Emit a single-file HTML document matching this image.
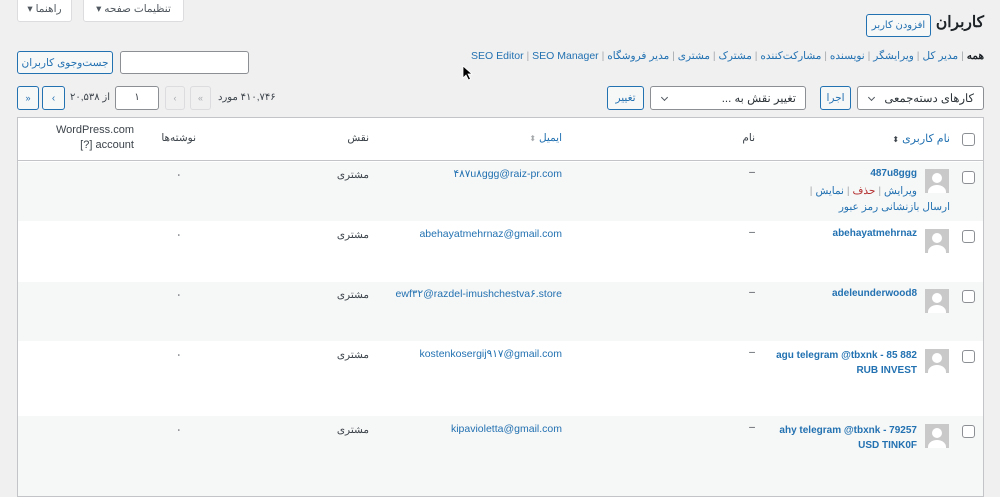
<!DOCTYPE html>
<html><head><meta charset="utf-8"><style>
*{box-sizing:border-box;margin:0;padding:0}
body{width:1000px;height:491px;overflow:hidden;background:#f0f0f1;font-family:"Liberation Sans","Noto Sans CJK SC",sans-serif;font-size:10.5px;color:#3c434a;position:relative}
.a{position:absolute;white-space:nowrap}
.rtl{direction:rtl}
.btn{position:absolute;border:1px solid #2271b1;color:#2271b1;background:#f6f7f7;border-radius:3px;font-size:10.5px;display:flex;align-items:center;justify-content:center;direction:rtl}
.sel{position:absolute;border:1px solid #8c8f94;background:#fff;border-radius:3px;font-size:11.5px;color:#2c3338;direction:rtl;padding-right:9px;display:flex;align-items:center}
.sel:after{content:"";position:absolute;left:11px;top:8px;width:4px;height:4px;border-right:1.3px solid #50575e;border-bottom:1.3px solid #50575e;transform:rotate(45deg)}
.lnk{color:#2271b1}
.iso{unicode-bidi:isolate}
.cb{position:absolute;width:13px;height:13px;border:1px solid #8c8f94;border-radius:3px;background:#fff}
.av{position:absolute;width:24px;height:24px;background:#c9c9c9;overflow:hidden}
.av:before{content:"";position:absolute;left:7px;top:4px;width:10px;height:10px;border-radius:50%;background:#fff}
.av:after{content:"";position:absolute;left:3px;top:16px;width:18px;height:14px;border-radius:50% 50% 0 0;background:#fff}
.row{position:absolute;left:18px;width:965px}
.r{position:absolute;direction:rtl;white-space:nowrap}
.un{font-size:10px;font-weight:bold}
</style></head><body>
<div class="a rtl" style="left:17px;top:-4px;width:55px;height:26px;background:#fff;border:1px solid #dcdcde;border-radius:3px;font-size:10.5px;display:flex;align-items:center;justify-content:center;color:#50575e">راهنما ▾</div>
<div class="a rtl" style="left:83px;top:-4px;width:101px;height:26px;background:#fff;border:1px solid #dcdcde;border-radius:3px;font-size:10.5px;display:flex;align-items:center;justify-content:center;color:#50575e">تنظیمات صفحه ▾</div>

<div class="r" style="right:16px;top:13px;font-size:15.5px;font-weight:bold;color:#1d2327">کاربران</div>
<div class="btn" style="left:866px;top:14px;width:65px;height:23px;font-size:10px">افزودن کاربر</div>

<div class="r" style="right:16px;top:50px;font-size:10.5px;color:#a7aaad"><b style="color:#1d2327">همه</b> | <span class="lnk">مدیر کل</span> | <span class="lnk">ویرایشگر</span> | <span class="lnk">نویسنده</span> | <span class="lnk">مشارکت‌کننده</span> | <span class="lnk">مشترک</span> | <span class="lnk">مشتری</span> | <span class="lnk">مدیر فروشگاه</span> | <span class="lnk iso">SEO Manager</span> | <span class="lnk iso">SEO Editor</span></div>

<div class="btn" style="left:17px;top:51px;width:96px;height:23px">جست‌وجوی کاربران</div>
<div class="a" style="left:120px;top:51px;width:129px;height:23px;background:#fff;border:1px solid #8c8f94;border-radius:3px"></div>
<svg class="a" style="left:462px;top:65px" width="12" height="16" viewBox="0 0 12 16"><path d="M1 1 L1 13 L4 10 L6.5 15 L8.5 14 L6 9 L10 9 Z" fill="#000" stroke="#fff" stroke-width="0.8"/></svg>

<div class="sel" style="left:857px;top:86px;width:127px;height:24px">کارهای دسته‌جمعی</div>
<div class="btn" style="left:820px;top:86px;width:31px;height:24px">اجرا</div>
<div class="sel" style="left:650px;top:86px;width:156px;height:24px">تغییر نقش به ...</div>
<div class="btn" style="left:607px;top:86px;width:37px;height:24px">تغییر</div>

<div class="btn" style="left:17px;top:86px;width:22px;height:24px;font-size:9px">«</div>
<div class="btn" style="left:42px;top:86px;width:23px;height:24px;font-size:10px">›</div>
<div class="r" style="left:70px;top:92px;font-size:10px">از ۲۰,۵۳۸</div>
<div class="a" style="left:115px;top:86px;width:44px;height:24px;background:#fff;border:1px solid #8c8f94;border-radius:3px;font-size:10px;text-align:center;line-height:22px">۱</div>
<div class="a" style="left:165px;top:86px;width:20px;height:24px;border:1px solid #dcdcde;border-radius:3px;color:#a7aaad;font-size:9px;text-align:center;line-height:22px">‹</div>
<div class="a" style="left:190px;top:86px;width:21px;height:24px;border:1px solid #dcdcde;border-radius:3px;color:#a7aaad;font-size:9px;text-align:center;line-height:22px">«</div>
<div class="r" style="left:218px;top:92px;font-size:10px">۴۱۰,۷۴۶ مورد</div>

<div class="a" style="left:17px;top:117px;width:967px;height:380px;border:1px solid #c3c4c7;background:#fff"></div>
<div class="row" style="top:118px;height:43px;background:#fff;border-bottom:1px solid #c3c4c7"></div>
<div class="row" style="top:162px;height:59px;background:#f6f7f7"></div>
<div class="row" style="top:221px;height:61px;background:#fff"></div>
<div class="row" style="top:282px;height:59px;background:#f6f7f7"></div>
<div class="row" style="top:341px;height:75px;background:#fff"></div>
<div class="row" style="top:416px;height:80px;background:#f6f7f7"></div>

<div class="cb" style="left:962px;top:133px"></div>
<div class="r lnk" style="right:50px;top:132px;font-size:11px">نام کاربری <span style="color:#3c434a;font-size:8px">⬍</span></div>
<div class="r" style="right:245px;top:132px">نام</div>
<div class="r lnk" style="right:438px;top:132px">ایمیل <span style="color:#a7aaad;font-size:8px">⬍</span></div>
<div class="r" style="right:631px;top:132px">نقش</div>
<div class="r" style="right:804px;top:132px">نوشته‌ها</div>
<div class="a" style="right:866px;top:123px;text-align:right;font-size:11px;line-height:15px">WordPress.com<br>[?] account</div>

<div class="cb" style="left:962px;top:171px"></div><div class="av" style="left:925px;top:169px"></div>
<div class="r lnk un" style="right:83px;top:168px">487u8ggg</div>
<div class="r" style="right:83px;top:185px;color:#a7aaad"><span class="lnk">ویرایش</span> | <span style="color:#b32d2e">حذف</span> | <span class="lnk">نمایش</span> |</div>
<div class="r lnk" style="right:50px;top:201px">ارسال بازنشانی رمز عبور</div>
<div class="r" style="right:245px;top:166px">–</div>
<div class="a lnk" style="right:438px;top:168px">۴۸۷u۸ggg@raiz-pr.com</div>
<div class="r" style="right:631px;top:169px">مشتری</div>
<div class="a" style="left:176px;top:169px">٠</div>

<div class="cb" style="left:962px;top:230px"></div><div class="av" style="left:925px;top:229px"></div>
<div class="a lnk un" style="right:83px;top:228px">abehayatmehrnaz</div>
<div class="r" style="right:245px;top:226px">–</div>
<div class="a lnk" style="right:438px;top:228px">abehayatmehrnaz@gmail.com</div>
<div class="r" style="right:631px;top:229px">مشتری</div>
<div class="a" style="left:176px;top:229px">٠</div>

<div class="cb" style="left:962px;top:290px"></div><div class="av" style="left:925px;top:289px"></div>
<div class="a lnk un" style="right:83px;top:288px">adeleunderwood8</div>
<div class="r" style="right:245px;top:286px">–</div>
<div class="a lnk" style="right:438px;top:288px">ewf۳۲@razdel-imushchestva۶.store</div>
<div class="r" style="right:631px;top:289px">مشتری</div>
<div class="a" style="left:176px;top:289px">٠</div>

<div class="cb" style="left:962px;top:350px"></div><div class="av" style="left:925px;top:349px"></div>
<div class="a lnk un" style="right:83px;top:348px;text-align:right;line-height:15px">agu telegram @tbxnk - 85 882<br>RUB INVEST</div>
<div class="r" style="right:245px;top:346px">–</div>
<div class="a lnk" style="right:438px;top:348px">kostenkosergij۹۱۷@gmail.com</div>
<div class="r" style="right:631px;top:349px">مشتری</div>
<div class="a" style="left:176px;top:349px">٠</div>

<div class="cb" style="left:962px;top:425px"></div><div class="av" style="left:925px;top:424px"></div>
<div class="a lnk un" style="right:83px;top:423px;text-align:right;line-height:15px">ahy telegram @tbxnk - 79257<br>USD TINK0F</div>
<div class="r" style="right:245px;top:421px">–</div>
<div class="a lnk" style="right:438px;top:423px">kipavioletta@gmail.com</div>
<div class="r" style="right:631px;top:424px">مشتری</div>
<div class="a" style="left:176px;top:424px">٠</div>
</body></html>
